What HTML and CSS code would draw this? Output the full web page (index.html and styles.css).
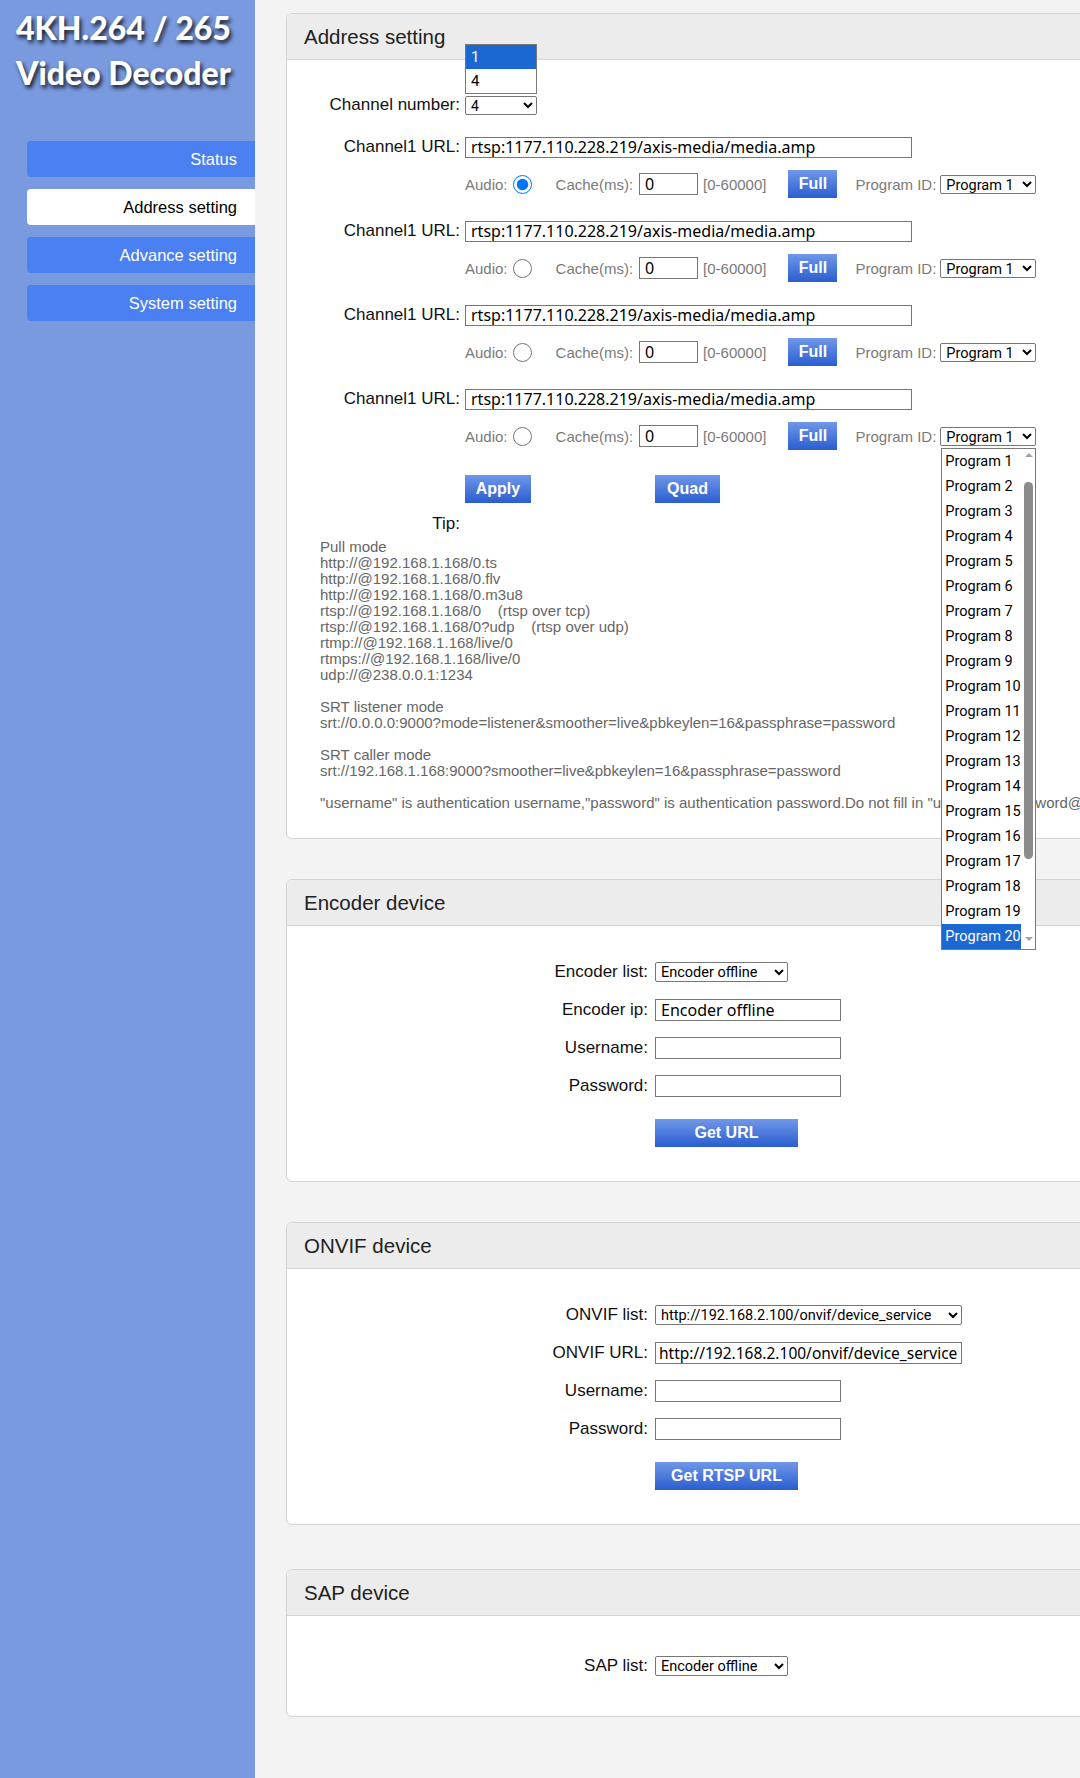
FILE: index.html
```html
<!DOCTYPE html>
<html lang="en">
<head>
  <meta charset="UTF-8">
  <meta name="viewport" content="width=device-width, initial-scale=1.0">
  <title>Address setting</title>
  <link rel="stylesheet" href="styles.css">
</head>
<body>
  <div class="layout">
    <aside class="sidebar">
      <div class="logo">4KH.264 / 265<br>Video Decoder</div>
      <nav class="nav">
        <a class="nav-item" href="#">Status</a>
        <a class="nav-item active" href="#">Address setting</a>
        <a class="nav-item" href="#">Advance setting</a>
        <a class="nav-item" href="#">System setting</a>
      </nav>
    </aside>

    <main class="main">
      <!-- address -->
      <section class="panel">
        <div class="panel-head">Address setting</div>
        <div class="panel-body addr">
          <div class="row">
            <label class="lbl">Channel number:</label>
            <span class="pop-wrap">
              <select class="sel sel-ch"><option>1</option><option selected>4</option></select>
              <div class="dropdown dropdown-up">
                <div class="dd-item on">1</div>
                <div class="dd-item">4</div>
              </div>
            </span>
          </div>

          <div class="chan first">
            <div class="row">
              <label class="lbl">Channel1 URL:</label>
              <input class="txt url" type="text" value="rtsp:1177.110.228.219/axis-media/media.amp">
            </div>
            <div class="row opts">
              <span>Audio:</span>
              <input class="radio" type="radio" name="audio" checked>
              <span class="gap-cache">Cache(ms):</span>
              <input class="txt cache" type="text" value="0">
              <span class="range">[0-60000]</span>
              <button class="btn btn-full">Full</button>
              <span class="gap-prog">Program ID:</span>
              <select class="sel sel-prog"><option>Program 1</option></select>
            </div>
          </div>

          <div class="chan">
            <div class="row">
              <label class="lbl">Channel1 URL:</label>
              <input class="txt url" type="text" value="rtsp:1177.110.228.219/axis-media/media.amp">
            </div>
            <div class="row opts">
              <span>Audio:</span>
              <input class="radio" type="radio" name="audio">
              <span class="gap-cache">Cache(ms):</span>
              <input class="txt cache" type="text" value="0">
              <span class="range">[0-60000]</span>
              <button class="btn btn-full">Full</button>
              <span class="gap-prog">Program ID:</span>
              <select class="sel sel-prog"><option>Program 1</option></select>
            </div>
          </div>

          <div class="chan">
            <div class="row">
              <label class="lbl">Channel1 URL:</label>
              <input class="txt url" type="text" value="rtsp:1177.110.228.219/axis-media/media.amp">
            </div>
            <div class="row opts">
              <span>Audio:</span>
              <input class="radio" type="radio" name="audio">
              <span class="gap-cache">Cache(ms):</span>
              <input class="txt cache" type="text" value="0">
              <span class="range">[0-60000]</span>
              <button class="btn btn-full">Full</button>
              <span class="gap-prog">Program ID:</span>
              <select class="sel sel-prog"><option>Program 1</option></select>
            </div>
          </div>

          <div class="chan">
            <div class="row">
              <label class="lbl">Channel1 URL:</label>
              <input class="txt url" type="text" value="rtsp:1177.110.228.219/axis-media/media.amp">
            </div>
            <div class="row opts">
              <span>Audio:</span>
              <input class="radio" type="radio" name="audio">
              <span class="gap-cache">Cache(ms):</span>
              <input class="txt cache" type="text" value="0">
              <span class="range">[0-60000]</span>
              <button class="btn btn-full">Full</button>
              <span class="gap-prog">Program ID:</span>
              <span class="pop-wrap">
                <select class="sel sel-prog"><option>Program 1</option></select>
                <div class="dropdown dropdown-prog">
                  <div class="dd-item">Program 1</div>
                  <div class="dd-item">Program 2</div>
                  <div class="dd-item">Program 3</div>
                  <div class="dd-item">Program 4</div>
                  <div class="dd-item">Program 5</div>
                  <div class="dd-item">Program 6</div>
                  <div class="dd-item">Program 7</div>
                  <div class="dd-item">Program 8</div>
                  <div class="dd-item">Program 9</div>
                  <div class="dd-item">Program 10</div>
                  <div class="dd-item">Program 11</div>
                  <div class="dd-item">Program 12</div>
                  <div class="dd-item">Program 13</div>
                  <div class="dd-item">Program 14</div>
                  <div class="dd-item">Program 15</div>
                  <div class="dd-item">Program 16</div>
                  <div class="dd-item">Program 17</div>
                  <div class="dd-item">Program 18</div>
                  <div class="dd-item">Program 19</div>
                  <div class="dd-item on">Program 20</div>
                  <div class="dd-scroll">
                    <span class="arrow-up"></span>
                    <span class="thumb"></span>
                    <span class="arrow-down"></span>
                  </div>
                </div>
              </span>
            </div>
          </div>

          <div class="row actions">
            <button class="btn btn-apply">Apply</button>
            <button class="btn btn-quad">Quad</button>
          </div>

          <div class="row tip-row">
            <label class="lbl">Tip:</label>
          </div>
          <div class="tips">Pull mode
http://@192.168.1.168/0.ts
http://@192.168.1.168/0.flv
http://@192.168.1.168/0.m3u8
rtsp://@192.168.1.168/0    (rtsp over tcp)
rtsp://@192.168.1.168/0?udp    (rtsp over udp)
rtmp://@192.168.1.168/live/0
rtmps://@192.168.1.168/live/0
udp://@238.0.0.1:1234

SRT listener mode
srt://0.0.0.0:9000?mode=listener&amp;smoother=live&amp;pbkeylen=16&amp;passphrase=password

SRT caller mode
srt://192.168.1.168:9000?smoother=live&amp;pbkeylen=16&amp;passphrase=password

"username" is authentication username,"password" is authentication password.Do not fill in "username:password@" if there is no authentication.</div>
        </div>
      </section>

      <!-- encoder -->
      <section class="panel">
        <div class="panel-head">Encoder device</div>
        <div class="panel-body dev">
          <div class="row">
            <label class="lbl">Encoder list:</label>
            <select class="sel sel-dev"><option>Encoder offline</option></select>
          </div>
          <div class="row">
            <label class="lbl">Encoder ip:</label>
            <input class="txt field" type="text" value="Encoder offline">
          </div>
          <div class="row">
            <label class="lbl">Username:</label>
            <input class="txt field" type="text">
          </div>
          <div class="row">
            <label class="lbl">Password:</label>
            <input class="txt field" type="password">
          </div>
          <div class="row btn-row">
            <button class="btn btn-wide">Get URL</button>
          </div>
        </div>
      </section>

      <!-- onvif -->
      <section class="panel">
        <div class="panel-head">ONVIF device</div>
        <div class="panel-body dev">
          <div class="row">
            <label class="lbl">ONVIF list:</label>
            <select class="sel sel-onvif"><option>http://192.168.2.100/onvif/device_service</option></select>
          </div>
          <div class="row">
            <label class="lbl">ONVIF URL:</label>
            <input class="txt field-long" type="text" value="http://192.168.2.100/onvif/device_service">
          </div>
          <div class="row">
            <label class="lbl">Username:</label>
            <input class="txt field" type="text">
          </div>
          <div class="row">
            <label class="lbl">Password:</label>
            <input class="txt field" type="password">
          </div>
          <div class="row btn-row">
            <button class="btn btn-wide">Get RTSP URL</button>
          </div>
        </div>
      </section>

      <!-- sap -->
      <section class="panel panel-sap">
        <div class="panel-head">SAP device</div>
        <div class="panel-body dev sap">
          <div class="row">
            <label class="lbl">SAP list:</label>
            <select class="sel sel-dev"><option>Encoder offline</option></select>
          </div>
        </div>
      </section>
    </main>
  </div>
</body>
</html>
```

FILE: styles.css
```css
html, body {
  margin: 0;
  height: 100%;
}
body {
  font-family: "Liberation Sans", Arial, sans-serif;
  background: #f3f3f3;
  color: #111;
  overflow: hidden;
}
.layout {
  display: flex;
  min-height: 1778px;
}

/* sidebar */
.sidebar {
  width: 255px;
  flex-shrink: 0;
  background: #7a9ae0;
}
.logo {
  padding: 5px 0 0 16px;
  color: #fff;
  font-family: Lato, "Open Sans", sans-serif;
  font-weight: 900;
  font-size: 32px;
  line-height: 45px;
  white-space: nowrap;
  text-shadow: 2px 3px 4px rgba(0, 0, 0, 0.85);
}
.nav {
  margin-top: 46px;
  padding-left: 27px;
  display: flex;
  flex-direction: column;
  gap: 12px;
}
.nav-item {
  height: 36px;
  display: flex;
  align-items: center;
  justify-content: flex-end;
  padding-right: 18px;
  background: #4a80f2;
  color: #fff;
  font-size: 16.5px;
  text-decoration: none;
  border-radius: 4px 0 0 4px;
}
.nav-item.active {
  background: #fff;
  color: #000;
}

/* panels */
.main {
  flex: 1;
  padding: 13px 0 0 31px;
}
.panel {
  width: 860px;
  background: #fff;
  border: 1px solid #d3d3d3;
  border-radius: 6px;
  margin-bottom: 40px;
}
.panel-sap {
  margin-top: 44px;
}
.panel-head {
  height: 45px;
  display: flex;
  align-items: center;
  padding-left: 17px;
  background: #ececec;
  border-bottom: 1px solid #d3d3d3;
  border-radius: 6px 6px 0 0;
  font-size: 20.5px;
  color: #222;
}

.row {
  display: flex;
  align-items: center;
  height: 28px;
}
.lbl {
  flex-shrink: 0;
  text-align: right;
  font-size: 17px;
  color: #111;
}

/* inputs */
.txt {
  box-sizing: border-box;
  height: 22px;
  margin: 0;
  padding: 0 5px;
  border: 1px solid #767676;
  border-radius: 0;
  font-family: "Noto Sans", sans-serif;
  font-size: 16px;
  color: #000;
  background: #fff;
}
.sel {
  box-sizing: border-box;
  height: 20px;
  margin: 0;
  padding: 0 1px;
  border: 1px solid #767676;
  border-radius: 2px;
  font-family: Roboto, sans-serif;
  font-size: 14.5px;
  color: #000;
  background: #fff;
}
.radio {
  width: 19px;
  height: 19px;
  margin: 0 0 0 5px;
}
.btn {
  height: 28px;
  padding: 0;
  border: none;
  color: #fff;
  font-family: "Liberation Sans", Arial, sans-serif;
  font-weight: bold;
  font-size: 16px;
  background: linear-gradient(#7097e8, #2a5dd0);
  cursor: pointer;
}

/* address panel */
.addr {
  padding: 31px 0 27px;
}
.addr .lbl {
  width: 173px;
  margin-right: 5px;
}
.sel-ch {
  width: 72px;
  height: 19px;
  font-size: 14px;
}
.chan {
  margin-top: 19px;
}
.chan.first {
  margin-top: 14px;
}
.chan .opts {
  margin-top: 9px;
}
.url {
  width: 447px;
  height: 21px;
}
.opts {
  padding-left: 178px;
  color: #7a7a7a;
  font-size: 15px;
}
.gap-cache {
  margin-left: 24px;
}
.cache {
  width: 59px;
  margin-left: 6px;
}
.range {
  margin-left: 5px;
}
.btn-full {
  width: 49px;
  margin-left: 22px;
}
.gap-prog {
  margin-left: 18px;
}
.sel-prog {
  width: 96px;
  height: 19px;
  margin-left: 4px;
}
.actions {
  margin-top: 25px;
  padding-left: 178px;
}
.btn-apply {
  width: 66px;
}
.btn-quad {
  width: 65px;
  margin-left: 124px;
}
.tip-row {
  height: 20px;
  margin-top: 11px;
}
.tips {
  margin-top: 5px;
  padding-left: 33px;
  font-size: 15px;
  line-height: 16px;
  color: #666;
  white-space: pre;
}

/* open dropdowns */
.pop-wrap {
  position: relative;
  display: inline-flex;
}
.dropdown {
  position: absolute;
  z-index: 10;
  background: #fff;
  border: 1px solid #7a7a7a;
  font-family: Roboto, sans-serif;
  color: #000;
}
.dropdown-up {
  left: 0;
  bottom: calc(100% + 2px);
  width: 72px;
  box-sizing: border-box;
}
.dropdown-up .dd-item {
  height: 24px;
  line-height: 24px;
  padding-left: 5px;
  font-size: 15px;
}
.dropdown-prog {
  left: 5px;
  top: calc(100% + 2px);
  width: 93px;
}
.dropdown-prog .dd-item {
  height: 25px;
  line-height: 25px;
  padding-left: 3px;
  margin-right: 14px;
  font-size: 14.5px;
  white-space: nowrap;
  overflow: hidden;
}
.dd-item.on {
  background: #1c68d3;
  color: #fff;
}
.dd-scroll {
  position: absolute;
  top: 0;
  right: 0;
  bottom: 0;
  width: 14px;
}
.thumb {
  position: absolute;
  left: 3px;
  top: 33px;
  width: 9px;
  height: 377px;
  border-radius: 5px;
  background: #8b8b8b;
}
.arrow-up, .arrow-down {
  position: absolute;
  left: 4px;
  width: 0;
  height: 0;
  border-left: 4px solid transparent;
  border-right: 4px solid transparent;
}
.arrow-up {
  top: 4px;
  border-bottom: 4px solid #a3a3a3;
}
.arrow-down {
  bottom: 8px;
  border-top: 4px solid #a3a3a3;
}

/* device panels */
.dev {
  padding: 32px 0 34px;
}
.dev .row + .row {
  margin-top: 10px;
}
.dev .row + .btn-row {
  margin-top: 19px;
}
.dev .lbl {
  width: 361px;
  margin-right: 7px;
}
.btn-row {
  padding-left: 368px;
}
.sel-dev {
  width: 133px;
}
.sel-onvif {
  width: 307px;
}
.field {
  width: 186px;
}
.field-long {
  width: 307px;
  padding: 0 3px;
  font-size: 15.5px;
}
.btn-wide {
  width: 143px;
}
.sap {
  padding: 36px 0 36px;
}
```
